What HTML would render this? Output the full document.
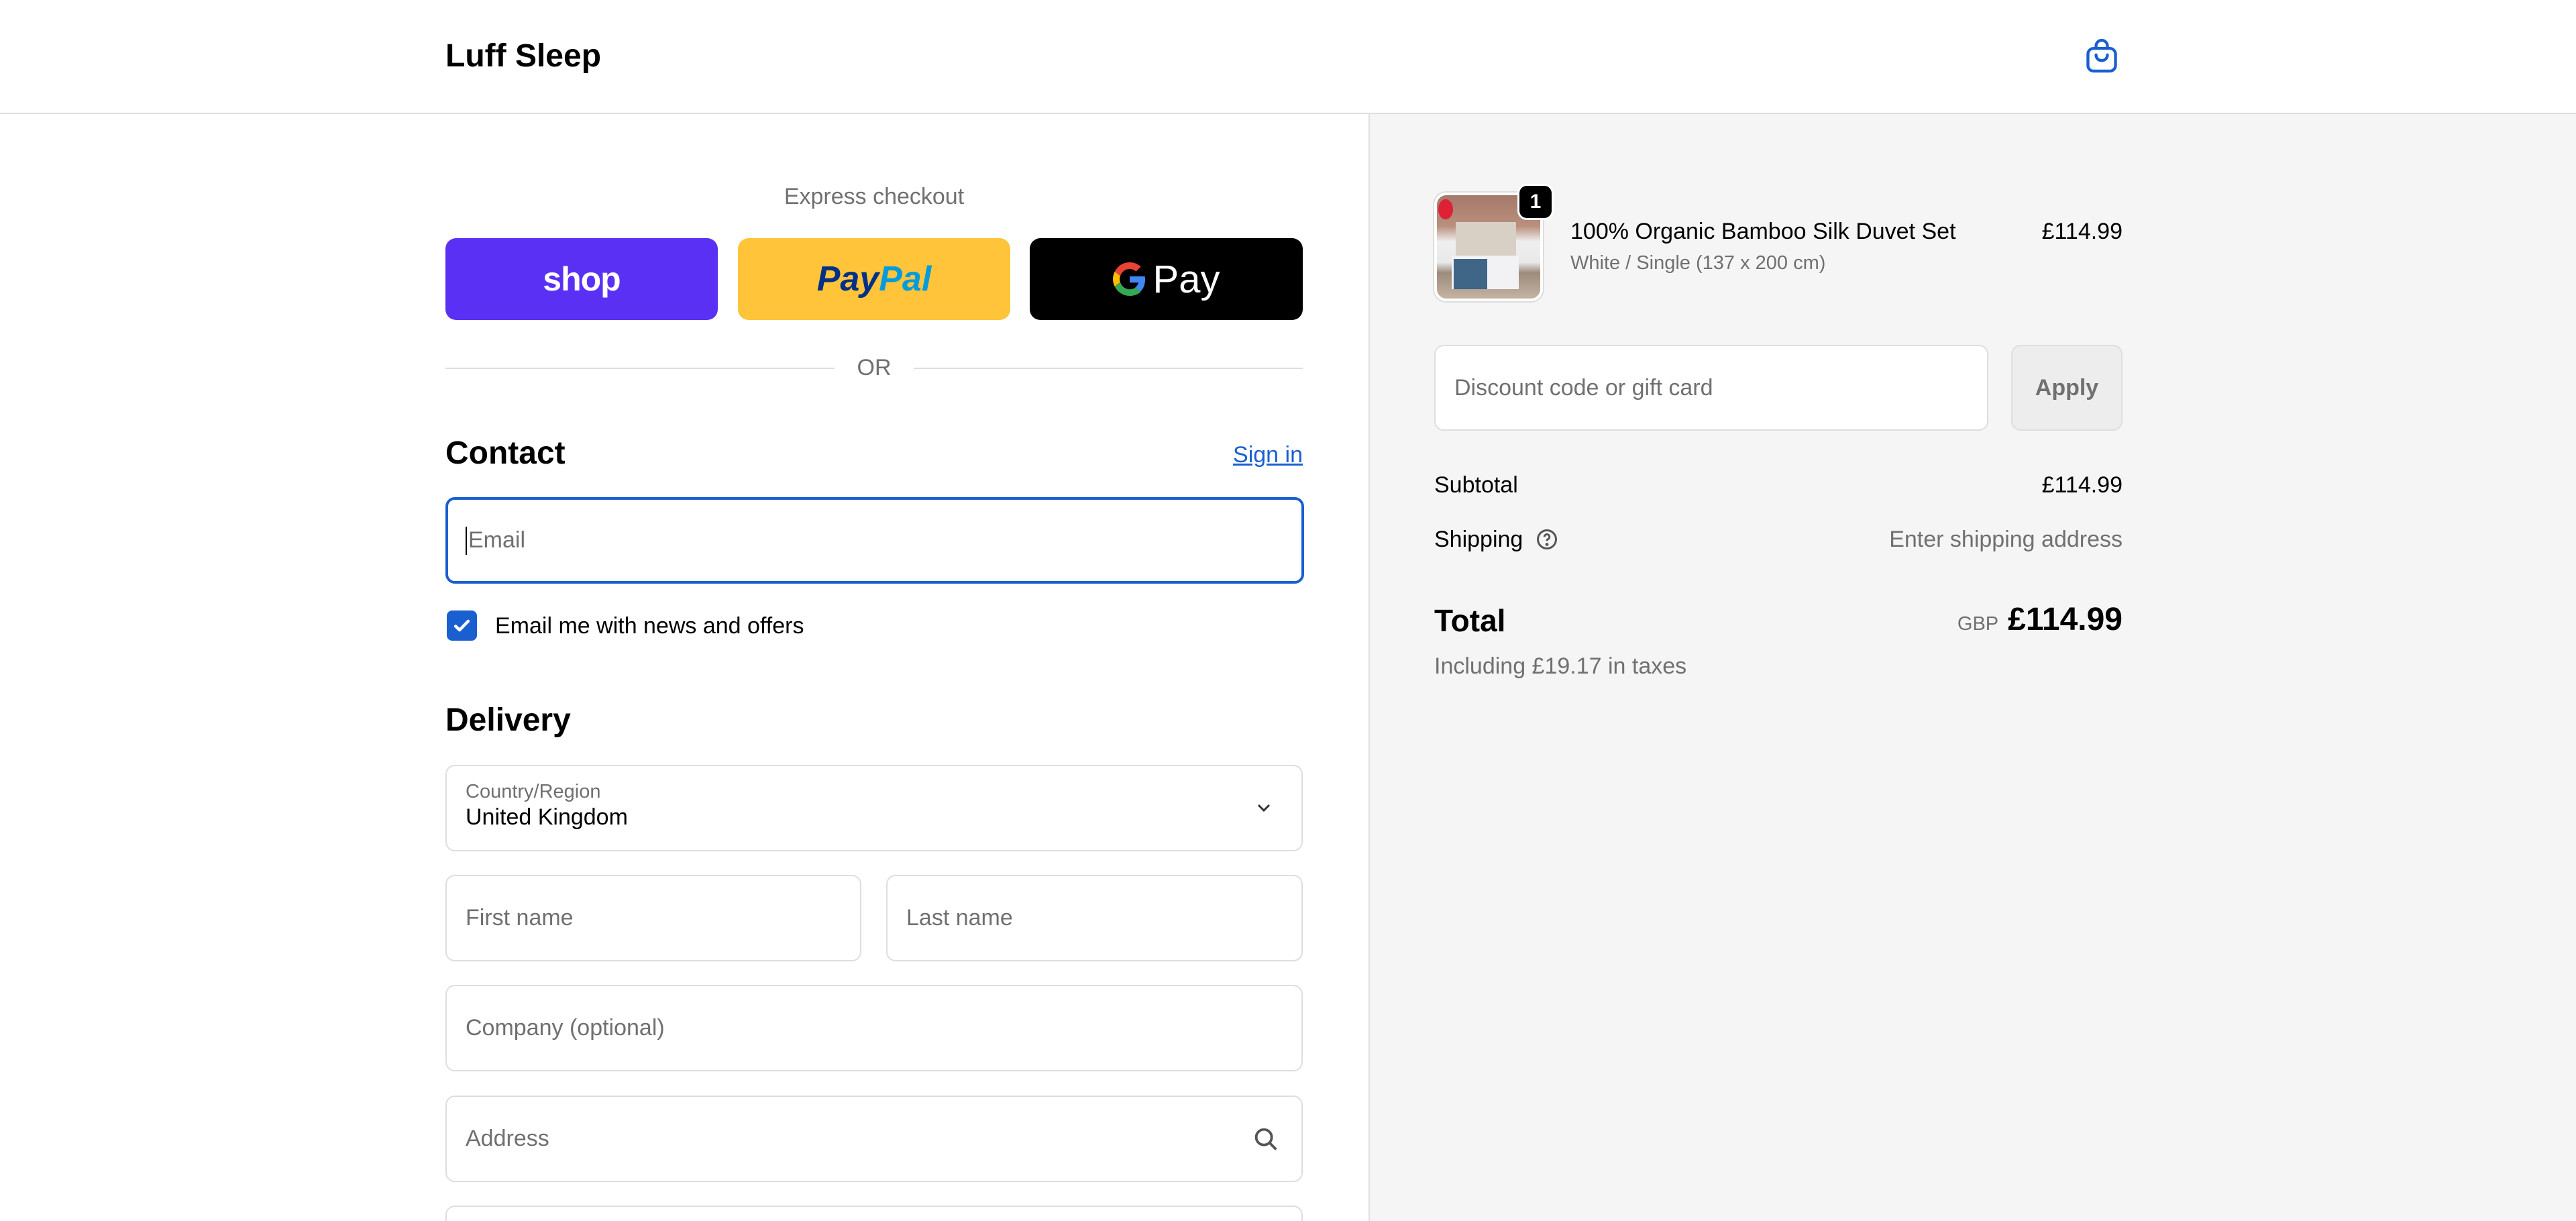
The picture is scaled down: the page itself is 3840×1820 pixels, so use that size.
<!DOCTYPE html>
<html style="width:3840px;height:1820px;overflow:hidden"><head><meta charset="utf-8"><style>
*{box-sizing:border-box;margin:0;padding:0}
body{width:3840px;height:1820px;overflow:hidden;background:#fff;font-family:"Liberation Sans",sans-serif;color:#000;position:relative}
.a{position:absolute}
.hdr{left:0;top:0;width:3840px;height:170px;border-bottom:2px solid #dedede;background:#fff}
.right{left:2040px;top:170px;width:1800px;height:1650px;background:#f5f5f5;border-left:2px solid #dedede}
.inp{position:absolute;border:2px solid #dedede;border-radius:14px;background:#fff;font-size:34px;color:#707070;padding-left:28px;display:flex;align-items:center}
.t35{font-size:34px}
</style></head><body>
<div class="a hdr"></div>
<div class="a" style="left:664px;top:56px;font-size:48px;font-weight:bold">Luff Sleep</div>
<svg class="a" style="left:3104px;top:54px" width="58" height="58" viewBox="0 0 24 24" fill="none" stroke="#1a5fd0" stroke-width="1.8" stroke-linecap="round" stroke-linejoin="round"><rect x="3.5" y="7.5" width="17" height="14" rx="3.5"/><path d="M8.5 7.5V6a3.5 3.5 0 0 1 7 0v1.5M8.5 11.5c0 2.2 1.6 3.5 3.5 3.5s3.5-1.3 3.5-3.5"/></svg>
<div class="a right"></div>

<div class="a" style="left:664px;width:1278px;top:274px;text-align:center;font-size:34px;color:#707070">Express checkout</div>
<div class="a" style="left:664px;top:355px;width:406px;height:122px;background:#5a31f4;border-radius:16px;display:flex;align-items:center;justify-content:center;color:#fff;font-size:50px;font-weight:bold;letter-spacing:-1px">shop</div>
<div class="a" style="left:1100px;top:355px;width:406px;height:122px;background:#ffc439;border-radius:16px;display:flex;align-items:center;justify-content:center;font-size:52px;font-weight:bold;font-style:italic"><span style="color:#003087">Pay</span><span style="color:#009cde">Pal</span></div>
<div class="a" style="left:1535px;top:355px;width:407px;height:122px;background:#000;border-radius:16px;display:flex;align-items:center;justify-content:center;color:#fff;font-size:58px">
<svg width="50" height="50" viewBox="0 0 48 48" style="margin-right:10px"><path fill="#EA4335" d="M24 9.5c3.5 0 6.6 1.2 9.1 3.6l6.8-6.8C35.8 2.4 30.3 0 24 0 14.6 0 6.6 5.4 2.7 13.3l7.9 6.1C12.5 13.7 17.8 9.5 24 9.5z"/><path fill="#4285F4" d="M46.1 24.5c0-1.6-.1-3.1-.4-4.5H24v9h12.4c-.5 2.9-2.2 5.4-4.7 7l7.6 5.9c4.4-4.1 6.8-10.1 6.8-17.4z"/><path fill="#FBBC05" d="M10.5 28.6c-.5-1.4-.8-3-.8-4.6s.3-3.2.8-4.6l-7.9-6.1C1 16.6 0 20.2 0 24s.9 7.4 2.6 10.7l7.9-6.1z"/><path fill="#34A853" d="M24 48c6.5 0 11.9-2.1 15.9-5.8l-7.6-5.9c-2.1 1.4-4.900 2.3-8.3 2.3-6.2 0-11.5-4.2-13.4-9.9l-7.9 6.1C6.6 42.6 14.6 48 24 48z"/></svg>Pay</div>

<div class="a" style="left:664px;top:548px;width:580px;height:2px;background:#dedede"></div>
<div class="a" style="left:1362px;top:548px;width:580px;height:2px;background:#dedede"></div>
<div class="a" style="left:1244px;width:118px;top:529px;text-align:center;font-size:34px;color:#707070">OR</div>

<div class="a" style="left:664px;top:648px;font-size:48px;font-weight:bold">Contact</div>
<div class="a" style="left:1780px;width:162px;text-align:right;top:659px;font-size:34px;color:#1a5fd0;text-decoration:underline">Sign in</div>
<div class="inp" style="left:664px;top:741px;width:1280px;height:129px;border:4px solid #1a5fd0;padding-left:26px"><span style="display:inline-block;width:2px;height:42px;background:#000;margin-right:2px"></span>Email</div>
<div class="a" style="left:666px;top:910px;width:45px;height:45px;background:#1a5fd0;border-radius:8px"><svg width="45" height="45" viewBox="0 0 24 24" fill="none" stroke="#fff" stroke-width="2.4" stroke-linecap="round" stroke-linejoin="round"><path d="M7 12.5l3.2 3L17 8.5"/></svg></div>
<div class="a t35" style="left:738px;top:914px">Email me with news and offers</div>

<div class="a" style="left:664px;top:1046px;font-size:48px;font-weight:bold">Delivery</div>
<div class="inp" style="left:664px;top:1140px;width:1278px;height:129px;display:block;padding-top:22px">
<div style="font-size:29px;color:#707070">Country/Region</div>
<div style="font-size:34px;color:#000;margin-top:2px">United Kingdom</div>
<svg class="a" style="right:40px;top:46px" width="32" height="32" viewBox="0 0 24 24" fill="none" stroke="#333" stroke-width="2.2"><path d="M6 9l6 6 6-6"/></svg></div>
<div class="inp" style="left:664px;top:1304px;width:620px;height:129px">First name</div>
<div class="inp" style="left:1321px;top:1304px;width:621px;height:129px">Last name</div>
<div class="inp" style="left:664px;top:1468px;width:1278px;height:129px">Company (optional)</div>
<div class="inp" style="left:664px;top:1633px;width:1278px;height:129px">Address
<svg class="a" style="right:30px;top:40px" width="46" height="46" viewBox="0 0 24 24" fill="none" stroke="#555" stroke-width="2"><circle cx="10.5" cy="10.5" r="6"/><path d="M15 15l5 5"/></svg></div>
<div class="a" style="left:664px;top:1797px;width:1278px;height:23px;border:2px solid #dedede;border-bottom:none;border-radius:14px 14px 0 0"></div>

<div class="a" style="left:2138px;top:287px;width:162px;height:162px;border-radius:18px;border:4px solid #fff;overflow:hidden;background:linear-gradient(#a4796a 0%,#b98f7d 30%,#efefef 45%,#e9e9ea 65%,#9d8b7c 75%,#c4b3a2 100%);box-shadow:0 0 0 2px #ddd">
<div class="a" style="left:28px;top:40px;width:90px;height:60px;background:#d8cfc5"></div>
<div class="a" style="left:22px;top:90px;width:100px;height:50px;background:#f2f2f4"></div>
<div class="a" style="left:25px;top:95px;width:50px;height:45px;background:#3f6587"></div>
<div class="a" style="left:2px;top:6px;width:22px;height:30px;border-radius:50%;background:#e02035"></div></div>
<div class="a" style="left:2262px;top:274px;width:54px;height:54px;border-radius:14px;background:#000;color:#fff;font-size:30px;font-weight:bold;display:flex;align-items:center;justify-content:center;border:3px solid #fff">1</div>
<div class="a t35" style="left:2341px;top:326px">100% Organic Bamboo Silk Duvet Set</div>
<div class="a t35" style="left:2964px;width:200px;text-align:right;top:326px">£114.99</div>
<div class="a" style="left:2341px;top:376px;font-size:29px;color:#707070">White / Single (137 x 200 cm)</div>

<div class="inp" style="left:2138px;top:514px;width:826px;height:128px">Discount code or gift card</div>
<div class="a" style="left:2998px;top:514px;width:166px;height:128px;border:2px solid #dedede;border-radius:14px;background:#ededed;color:#707070;font-size:34px;font-weight:bold;display:flex;align-items:center;justify-content:center">Apply</div>

<div class="a t35" style="left:2138px;top:704px">Subtotal</div>
<div class="a t35" style="left:2900px;width:264px;text-align:right;top:704px">£114.99</div>
<div class="a t35" style="left:2138px;top:785px">Shipping</div>
<svg class="a" style="left:2288px;top:786px" width="36" height="36" viewBox="0 0 24 24" fill="none" stroke="#555" stroke-width="2"><circle cx="12" cy="12" r="9"/><path d="M9.5 9.5a2.5 2.5 0 1 1 3.5 2.3c-.7.4-1 .9-1 1.7"/><circle cx="12" cy="17" r=".6" fill="#555"/></svg>
<div class="a t35" style="left:2700px;width:464px;text-align:right;top:785px;color:#707070">Enter shipping address</div>
<div class="a" style="left:2138px;top:898px;font-size:46px;font-weight:bold">Total</div>
<div class="a" style="left:2900px;width:264px;text-align:right;top:896px;font-size:48px;font-weight:bold"><span style="font-size:29px;font-weight:normal;color:#707070;margin-right:14px">GBP</span>£114.99</div>
<div class="a t35" style="left:2138px;top:974px;color:#707070">Including £19.17 in taxes</div>
</body></html>
